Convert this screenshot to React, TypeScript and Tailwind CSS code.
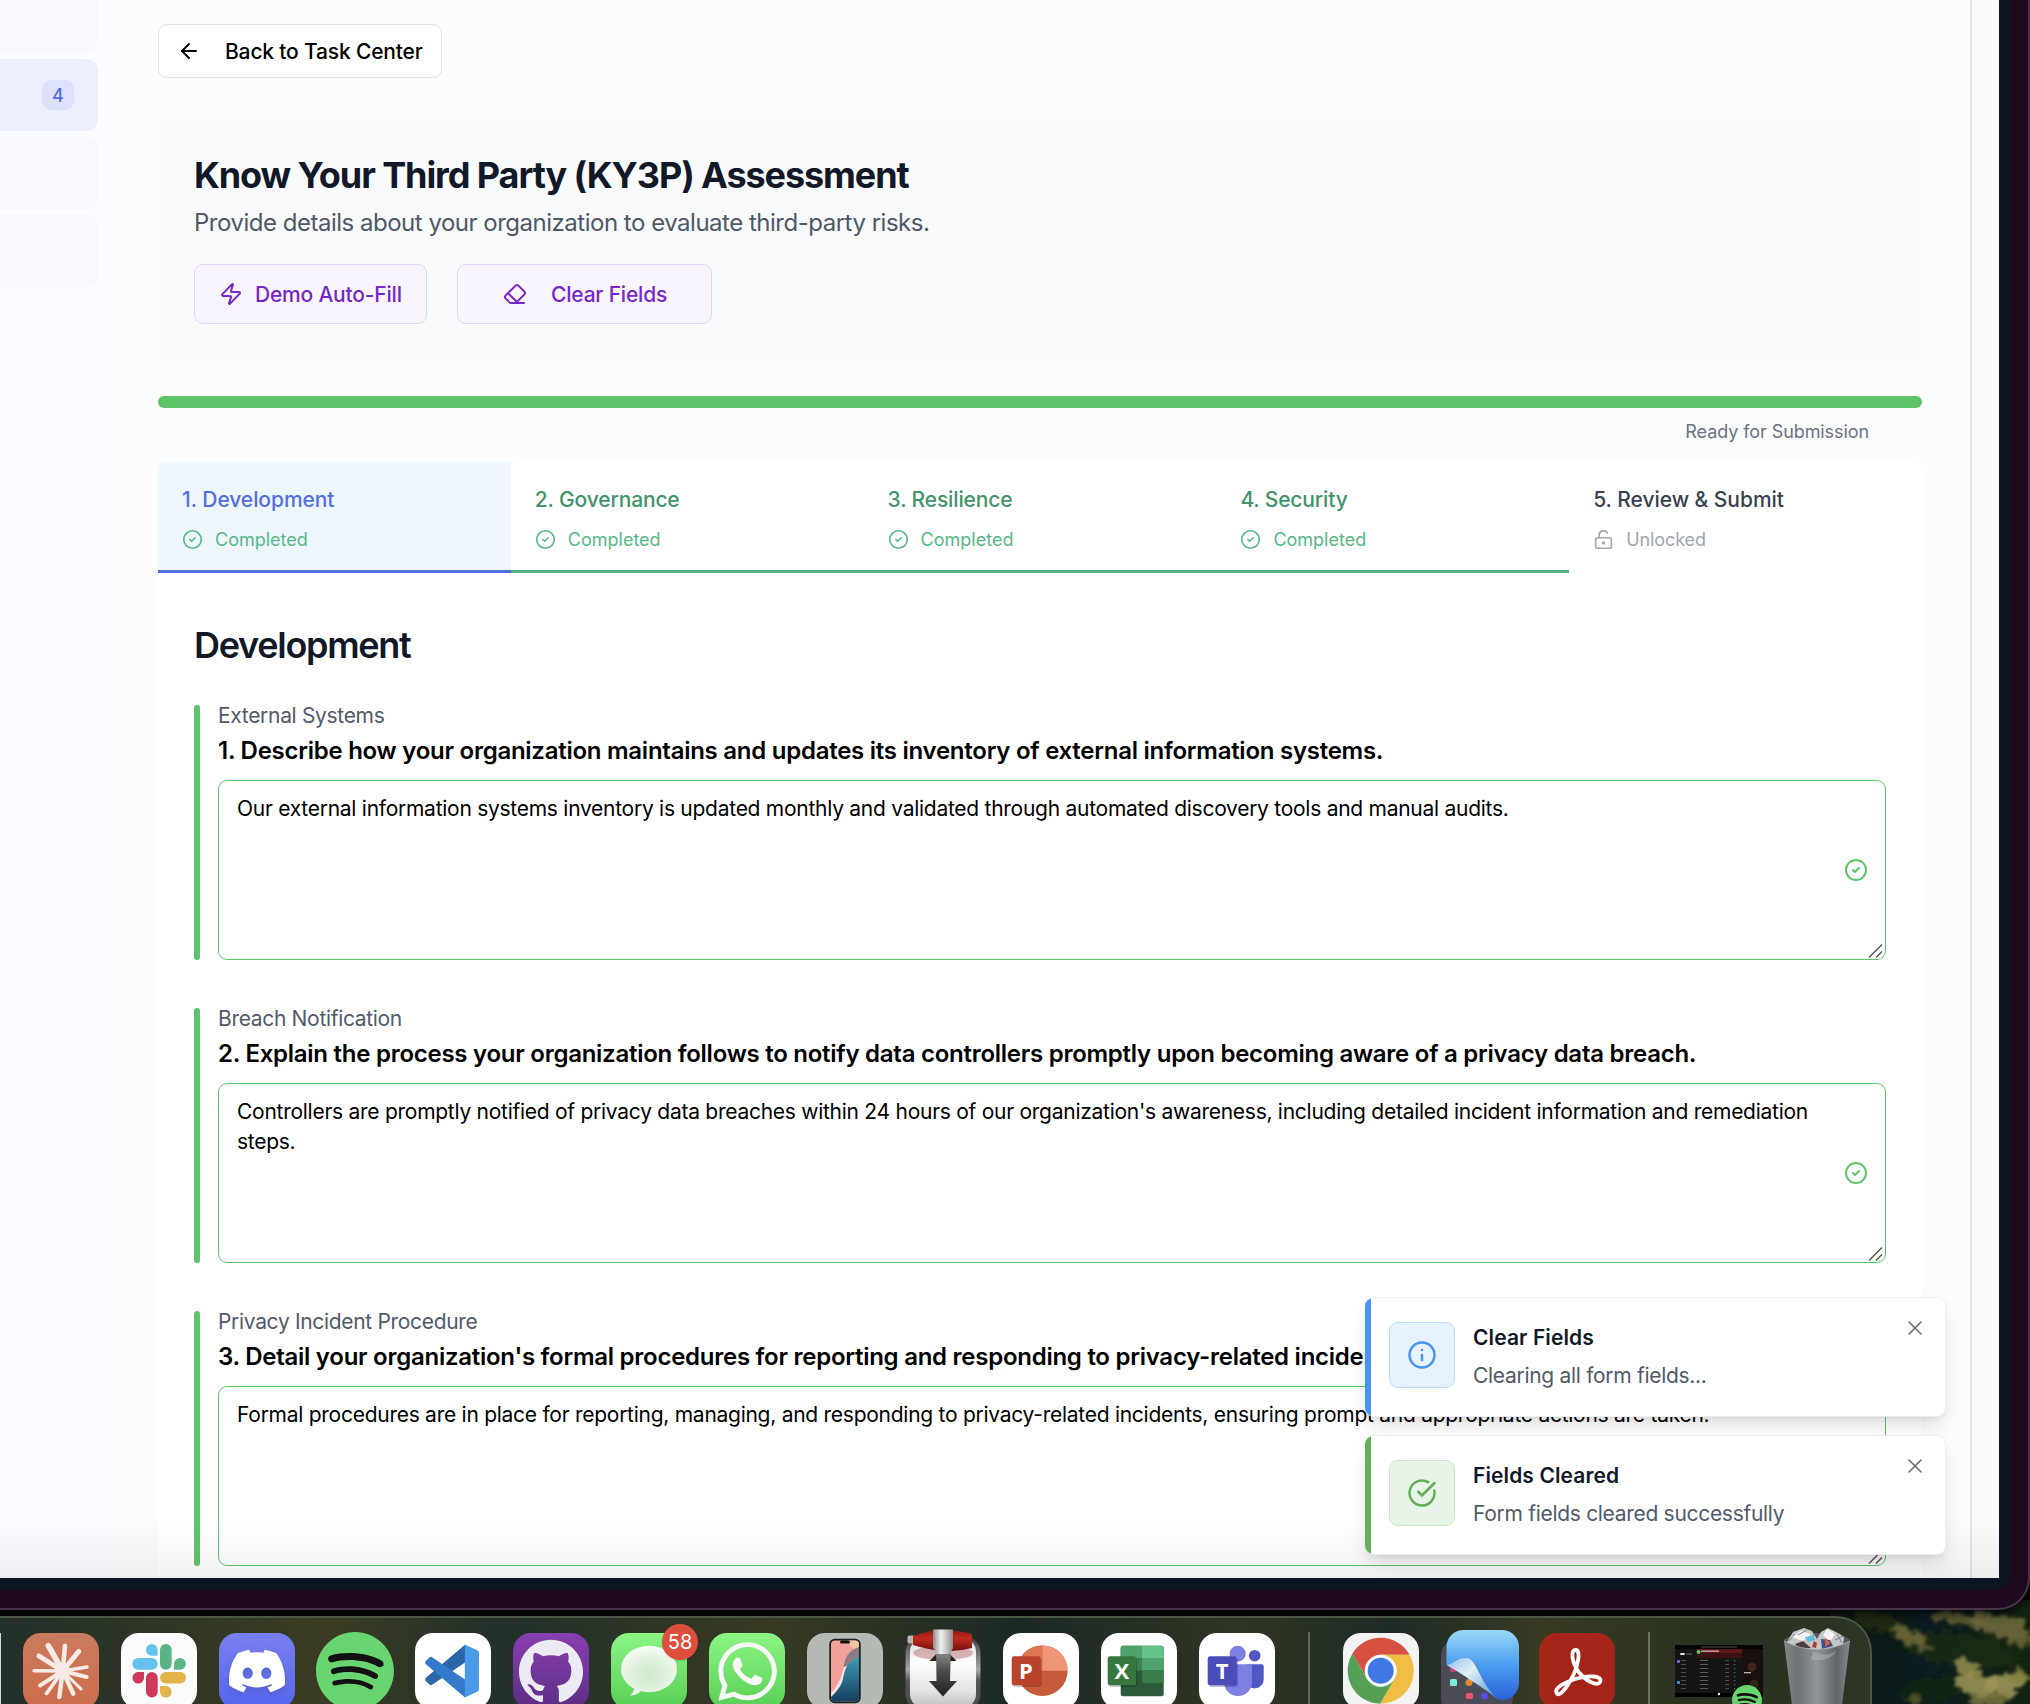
import type { ReactNode } from "react";
import {
  ArrowLeft,
  CircleCheck,
  CircleCheckBig,
  Eraser,
  Info,
  LockKeyholeOpen,
  X,
  Zap,
} from "lucide-react";
import { SiDiscord, SiGithub, SiSpotify } from "react-icons/si";
import { FaWhatsapp } from "react-icons/fa";

const fields = [
  {
    label: "External Systems",
    question:
      "1. Describe how your organization maintains and updates its inventory of external information systems.",
    answer:
      "Our external information systems inventory is updated monthly and validated through automated discovery tools and manual audits.",
  },
  {
    label: "Breach Notification",
    question:
      "2. Explain the process your organization follows to notify data controllers promptly upon becoming aware of a privacy data breach.",
    answer:
      "Controllers are promptly notified of privacy data breaches within 24 hours of our organization's awareness, including detailed incident information and remediation steps.",
  },
  {
    label: "Privacy Incident Procedure",
    question:
      "3. Detail your organization's formal procedures for reporting and responding to privacy-related incidents.",
    answer:
      "Formal procedures are in place for reporting, managing, and responding to privacy-related incidents, ensuring prompt and appropriate actions are taken.",
  },
];

function Sidebar() {
  return (
    <aside className="flex w-[110px] shrink-0 flex-col gap-1.5 bg-[#fbfcff]">
      <div className="h-[53px] w-[98px] rounded-br-xl bg-[#f8f9fd]" />
      <div className="flex h-[72px] w-[98px] items-center justify-end rounded-r-xl bg-[#ebeffe] pr-6">
        <span className="flex h-[30px] w-8 items-center justify-center rounded-[9px] bg-[#dde2fa] text-[18px] font-medium text-[#536ce3]">
          4
        </span>
      </div>
      <div className="h-[72px] w-[98px] rounded-r-xl bg-[#f8f9fd]" />
      <div className="h-[72px] w-[98px] rounded-r-xl bg-[#f8f9fd]" />
    </aside>
  );
}

function HeaderCard() {
  return (
    <section className="mt-9 h-[246px] rounded-t-lg bg-[#f9fafc] p-9">
      <h1 className="text-[36px] font-bold leading-[50px] tracking-[-1.09px] text-[#111827]">
        Know Your Third Party (KY3P) Assessment
      </h1>
      <p className="mt-[5px] text-[24px] leading-9 tracking-[-0.49px] text-[#4f5866]">
        Provide details about your organization to evaluate third-party risks.
      </p>
      <div className="mt-[23px] flex gap-[30px] text-[21px] font-medium tracking-[-0.2px] text-[#7627c8]">
        <button className="flex h-[60px] w-[233px] items-center rounded-[9px] border border-[#e6d3fb] bg-[#f9f5ff] pl-6">
          <Zap size={24} strokeWidth={2} />
          <span className="ml-3 pt-0.5">Demo Auto-Fill</span>
        </button>
        <button className="flex h-[60px] w-[255px] items-center rounded-[9px] border border-[#e6d3fb] bg-[#f9f5ff] pl-[45px]">
          <Eraser size={24} strokeWidth={2} />
          <span className="ml-6 pt-0.5">Clear Fields</span>
        </button>
      </div>
    </section>
  );
}

function CompletedTab({ title, active }: { title: string; active?: boolean }) {
  return (
    <div
      className={
        active
          ? "flex-1 rounded-tl-lg border-b-[3px] border-[#526fe2] bg-[#eef6fe] pl-6 pt-[23px]"
          : "flex-1 border-b-[3px] border-[#52b284] pl-6 pt-[23px]"
      }
    >
      <div
        className={
          active
            ? "text-[21px] font-medium leading-[30px] tracking-[-0.06px] text-[#536fe4]"
            : "text-[21px] font-medium leading-[30px] tracking-[-0.15px] text-[#42946b]"
        }
      >
        {title}
      </div>
      <div className="mt-3 flex h-6 items-center gap-3 text-[18px] text-[#58b888]">
        <CircleCheck size={21} strokeWidth={1.9} />
        Completed
      </div>
    </div>
  );
}

function Tabs() {
  return (
    <div className="flex h-[111px]">
      <CompletedTab title="1. Development" active />
      <CompletedTab title="2. Governance" />
      <CompletedTab title="3. Resilience" />
      <CompletedTab title="4. Security" />
      <div className="flex-1 pl-6 pt-[23px]">
        <div className="text-[21px] font-medium leading-[30px] tracking-[-0.04px] text-[#384151]">
          5. Review &amp; Submit
        </div>
        <div className="mt-3 flex h-6 items-center gap-3 text-[18px] tracking-[-0.1px] text-[#a1a7b2]">
          <LockKeyholeOpen size={21} strokeWidth={1.9} />
          Unlocked
        </div>
      </div>
    </div>
  );
}

function Field({ label, question, answer }: (typeof fields)[number]) {
  return (
    <div className="flex h-[255px] shrink-0 gap-[18px]">
      <div className="w-1.5 rounded-full bg-[#5fc469]" />
      <div className="flex-1">
        <div className="text-[21px] leading-[21px] tracking-[-0.32px] text-[#525a68]">{label}</div>
        <div className="mt-[7px] whitespace-nowrap text-[24px] font-semibold leading-9 tracking-[-0.26px] text-black">
          {question}
        </div>
        <div className="relative mt-[11px] h-[180px] w-[1668px] rounded-[9px] border border-[#5fc469] bg-white pl-[18px] pr-[69px] pt-[13px]">
          <p className="text-[21px] leading-[30px] tracking-[-0.265px] text-black">{answer}</p>
          <CircleCheck
            size={24}
            strokeWidth={1.9}
            className="absolute right-[17px] top-[77px] text-[#5fc469]"
          />
          <svg
            viewBox="0 0 16 16"
            className="absolute bottom-0 right-px h-4 w-4"
            fill="none"
            stroke="#555"
            strokeWidth="1.5"
          >
            <path d="M1 14.500 14 1.500M8 14.500l6-6" />
          </svg>
        </div>
      </div>
    </div>
  );
}

function Toast({
  kind,
  title,
  text,
}: {
  kind: "info" | "success";
  title: string;
  text: string;
}) {
  const info = kind === "info";
  return (
    <div className="flex h-[120px] w-[581px] overflow-hidden rounded-[9px] border border-l-0 border-[#eeeff1] bg-white shadow-[0_12px_22px_-4px_rgba(0,0,0,0.12),0_4px_8px_-4px_rgba(0,0,0,0.1)]">
      <div className={info ? "w-1.5 bg-[#4795f0]" : "w-1.5 bg-[#66b05c]"} />
      <div
        className={
          info
            ? "ml-[18px] mt-6 flex size-[66px] items-center justify-center rounded-[9px] border border-[#c0dbf8] bg-[#e6f2fd] text-[#4795f0]"
            : "ml-[18px] mt-6 flex size-[66px] items-center justify-center rounded-[9px] border border-[#cbe6cb] bg-[#e9f4e8] text-[#62ae58]"
        }
      >
        {info ? <Info size={30} strokeWidth={2} /> : <CircleCheckBig size={30} strokeWidth={2} />}
      </div>
      <div className="ml-[18px] mt-[25px] flex-1">
        <div className="text-[21px] font-semibold leading-[30px] tracking-[0.1px] text-[#111827]">
          {title}
        </div>
        <div className="mt-2 text-[21px] leading-[30px] tracking-[-0.3px] text-[#525a68]">
          {text}
        </div>
      </div>
      <X size={24} strokeWidth={1.6} className="mr-[18px] mt-[18px] text-[#666e7c]" />
    </div>
  );
}

function DockIcon({ children, className = "" }: { children?: ReactNode; className?: string }) {
  return (
    <div
      className={`relative flex size-[76px] shrink-0 items-center justify-center rounded-[18px] ${className}`}
    >
      {children}
    </div>
  );
}

function Art({ children }: { children: ReactNode }) {
  return (
    <svg viewBox="0 0 76 76" className="size-[76px] overflow-visible">
      {children}
    </svg>
  );
}

const rays = [
  [25.3, 12.7, 5.6],
  [42, 12.7, 4.6],
  [55.7, 18.5, 5],
  [64, 34, 3.6],
  [63.6, 44, 4],
  [58, 56, 3],
  [50.3, 60.7, 4.4],
  [36.3, 64, 4.4],
  [23.5, 60.5, 3.8],
  [17, 52.5, 4],
  [11, 37.7, 3.4],
  [16, 23, 5],
];

function Claude() {
  return (
    <Art>
      <g stroke="#f8ebe5" strokeLinecap="round">
        {rays.map(([x, y, w]) => (
          <line key={x} x1="39.7" y1="38" x2={x} y2={y} strokeWidth={w} />
        ))}
      </g>
      <circle cx="39.7" cy="38" r="7" fill="#f8ebe5" />
    </Art>
  );
}

function Slack() {
  return (
    <Art>
      <path d="M30.8 11a5.8 5.8 0 0 1 5.8 5.8v6h-5.8a5.9 5.9 0 0 1 0-11.8Z" fill="#63c3ec" />
      <rect x="11.3" y="25" width="25.4" height="11.7" rx="5.8" fill="#63c3ec" />
      <rect x="39" y="11" width="11.7" height="25.7" rx="5.8" fill="#5ab483" />
      <path d="M59 25a5.8 5.8 0 0 1 0 11.7h-5.9V31A5.9 5.9 0 0 1 59 25Z" fill="#5ab483" />
      <path d="M17.1 39H23v5.8A5.8 5.8 0 1 1 17.1 39Z" fill="#cf375c" />
      <rect x="25" y="39" width="11.7" height="25.4" rx="5.8" fill="#cf375c" />
      <rect x="39" y="39" width="26" height="11.4" rx="5.7" fill="#e3b34c" />
      <path d="M39 53h5.8a5.8 5.8 0 1 1-5.8 5.8Z" fill="#e3b34c" />
    </Art>
  );
}

function VsCode() {
  return (
    <Art>
      <path d="M50 11.8V29.5L17.5 51.6a2.5 2.5 0 0 1-3 0l-3.3-3a2.5 2.5 0 0 1 0-4Z" fill="#2a66a9" />
      <path d="M50 64.6V46.5L17.5 24.4a2.5 2.5 0 0 0-3 0l-3.3 3a2.5 2.5 0 0 0 0 4Z" fill="#3579ca" />
      <path d="M49.8 11.6 62.6 17.6A2.6 2.6 0 0 1 64 20V56a2.6 2.6 0 0 1-1.4 2.4L49.8 64.6Z" fill="#4b9bea" />
    </Art>
  );
}

function Messages() {
  return (
    <>
      <Art>
        <defs>
          <radialGradient id="bubble" cx="0.5" cy="0.62" r="0.6">
            <stop offset="0" stopColor="#cfe8cb" />
            <stop offset="0.6" stopColor="#e3f3e0" />
            <stop offset="1" stopColor="#f8fcf7" />
          </radialGradient>
        </defs>
        <path d="M23 52c1 4-1 8-4 10.600 5 0 9-2 12-6Z" fill="#e6f6e3" />
        <ellipse cx="38" cy="36" rx="28" ry="23.200" fill="url(#bubble)" />
      </Art>
      <span className="absolute -right-[11px] -top-[9px] flex size-9 items-center justify-center rounded-full bg-[#de4e3c] text-[20px] font-normal text-white shadow">
        58
      </span>
    </>
  );
}

function Phone() {
  return (
    <Art>
      <defs>
        <linearGradient id="wave" x1="0" y1="0" x2="0" y2="1">
          <stop offset="0" stopColor="#3f9cb4" />
          <stop offset="1" stopColor="#153a5e" />
        </linearGradient>
        <clipPath id="screen">
          <rect x="24" y="7.500" width="28" height="61" rx="4" />
        </clipPath>
      </defs>
      <rect x="22.300" y="5.700" width="31.400" height="64.500" rx="5.500" fill="#1b1c20" />
      <g clipPath="url(#screen)">
        <rect x="24" y="7" width="28" height="62" fill="#f2a29b" />
        <path d="M40 7h12v12c-5-2-9-7-12-12Z" fill="#f6c59f" />
        <path d="M52 14c-10 3-16 12-15 22l15-10Z" fill="#8a7d86" />
        <path d="M24 60c6-6 10-14 13-26l6-2-12 28-7 8Z" fill="#efe4df" />
        <path d="M52 24C38 30 38 38 36 46c-2 8-8 14-12 18v6h28Z" fill="url(#wave)" />
      </g>
      <rect x="33" y="7.500" width="10" height="3" rx="1.500" fill="#111" />
    </Art>
  );
}

function Transmission() {
  return (
    <Art>
      <defs>
        <linearGradient id="steel" x1="0" y1="0" x2="0" y2="1">
          <stop offset="0" stopColor="#d9d9d9" />
          <stop offset="0.35" stopColor="#ffffff" />
          <stop offset="0.75" stopColor="#e4e4e4" />
          <stop offset="1" stopColor="#bdbdbd" />
        </linearGradient>
        <linearGradient id="frame" x1="0" y1="0" x2="0" y2="1">
          <stop offset="0" stopColor="#3c3c3c" />
          <stop offset="0.45" stopColor="#a8a8a8" />
          <stop offset="0.6" stopColor="#555" />
          <stop offset="1" stopColor="#4a4a4a" />
        </linearGradient>
        <linearGradient id="lever" x1="0" y1="0" x2="0" y2="1">
          <stop offset="0" stopColor="#9b9b9b" />
          <stop offset="0.5" stopColor="#4a4a4a" />
          <stop offset="1" stopColor="#202020" />
        </linearGradient>
        <linearGradient id="band" x1="0" y1="0" x2="1" y2="0">
          <stop offset="0" stopColor="#8c8c8c" />
          <stop offset="0.4" stopColor="#f2f2f2" />
          <stop offset="1" stopColor="#8c8c8c" />
        </linearGradient>
        <linearGradient id="grip" x1="0" y1="0" x2="0" y2="1">
          <stop offset="0" stopColor="#8f1a14" />
          <stop offset="0.4" stopColor="#c22a1c" />
          <stop offset="1" stopColor="#6e0f0c" />
        </linearGradient>
      </defs>
      <rect x="0.500" y="3" width="75" height="75" rx="17" fill="url(#frame)" />
      <rect x="5" y="5" width="66" height="70" rx="14" fill="url(#steel)" />
      <ellipse cx="38" cy="20" rx="30" ry="7" fill="#a53a34" opacity="0.350" />
      <path d="M24.500 28 38 14l13.500 14Z" fill="#222" />
      <path d="M31 14h15l-1 34h7L38 63.500 24 48h7.500Z" fill="url(#lever)" />
      <rect x="2.500" y="2.500" width="8" height="8" rx="2" fill="#b8b8b8" />
      <path d="M8 3Q24-3 38-3t29 4v14q-15 4-29 3T8 12Z" fill="url(#grip)" />
      <path d="M28-3.500h20V15q-2 3-2 6H31q0-4-3-6Z" fill="url(#band)" />
    </Art>
  );
}

function Letter({ children, x, y = 45.5 }: { children: string; x: number; y?: number }) {
  return (
    <text
      x={x}
      y={y}
      textAnchor="middle"
      fontFamily="Open Sans, sans-serif"
      fontWeight="700"
      fontSize="22"
      fill="#fff"
    >
      {children}
    </text>
  );
}

function PowerPoint() {
  return (
    <Art>
      <circle cx="39.300" cy="37.700" r="25.300" fill="#c65b3c" />
      <path d="M39.300 12.400v25.300H14a25.300 25.300 0 0 1 25.300-25.300Z" fill="#de7551" />
      <path d="M39.300 12.400a25.300 25.300 0 0 1 25.300 25.300H39.300Z" fill="#f09575" />
      <rect x="9.700" y="25" width="29" height="29" rx="2.500" fill="#000" opacity="0.200" />
      <rect x="8.700" y="23.300" width="29" height="29" rx="2.500" fill="#b8432a" />
      <Letter x={23}>P</Letter>
    </Art>
  );
}

function Excel() {
  return (
    <Art>
      <rect x="19.700" y="12.700" width="43" height="50.500" rx="2.500" fill="#2b5b38" />
      <path d="M22.200 12.700H41V25H19.700v-9.800a2.500 2.500 0 0 1 2.500-2.500Z" fill="#4fa26c" />
      <path d="M41 12.700h19.200a2.500 2.500 0 0 1 2.500 2.500V25H41Z" fill="#63c388" />
      <path d="M19.700 25H41v12.500H19.700Z" fill="#3c8152" />
      <path d="M41 25h21.700v12.500H41Z" fill="#4fa26c" />
      <path d="M41 37.500h21.700V50H41Z" fill="#3a7b4a" />
      <rect x="7.700" y="25" width="28.500" height="29" rx="2.500" fill="#000" opacity="0.200" />
      <rect x="6.700" y="23.300" width="28.500" height="29" rx="2.500" fill="#36763f" />
      <Letter x={20.8}>X</Letter>
    </Art>
  );
}

function Teams() {
  return (
    <Art>
      <circle cx="55.700" cy="22.700" r="5.800" fill="#5158c4" />
      <path d="M48 31.300h14.700a2 2 0 0 1 2 2V46a9 9 0 0 1-16.700 5Z" fill="#5158c4" />
      <circle cx="38.700" cy="20.700" r="8" fill="#7c80e2" />
      <path d="M25 31.300h26a2 2 0 0 1 2 2V49a14 14 0 0 1-28 0Z" fill="#7c80e2" />
      <rect x="10" y="25" width="29" height="29" rx="2.500" fill="#23267a" opacity="0.300" />
      <rect x="8.700" y="23.300" width="29" height="29" rx="2.500" fill="#4a4db8" />
      <Letter x={23.2}>T</Letter>
    </Art>
  );
}

function Chrome() {
  return (
    <Art>
      <path d="M23.800 45.700 9.400 20.700A33 33 0 0 1 66.600 21.700H37.700Z" fill="#d75141" />
      <path d="M37.700 21.700H66.600A33 33 0 0 1 37.100 70.700L51.600 45.700Z" fill="#f2bd45" />
      <path d="M51.600 45.700 37.100 70.700A33 33 0 0 1 9.400 20.700L23.800 45.700Z" fill="#54a056" />
      <circle cx="37.700" cy="37.700" r="16" fill="#fff" />
      <circle cx="37.700" cy="37.700" r="13" fill="#4079e6" />
    </Art>
  );
}

function Peel() {
  return (
    <Art>
      <defs>
        <linearGradient id="sheet" x1="0" y1="0" x2="0" y2="1">
          <stop offset="0" stopColor="#9ad8fa" />
          <stop offset="0.5" stopColor="#4a9eee" />
          <stop offset="1" stopColor="#2b62d6" />
        </linearGradient>
        <linearGradient id="curl" x1="0" y1="0" x2="1" y2="1">
          <stop offset="0" stopColor="#8fbfe8" />
          <stop offset="0.4" stopColor="#e3f1f8" />
          <stop offset="1" stopColor="#4f93da" />
        </linearGradient>
      </defs>
      <rect x="0" y="6" width="72" height="76" rx="17" fill="#4b4c56" />
      <rect x="9" y="33" width="6" height="6" rx="2" fill="#cf3f78" />
      <rect x="9" y="46" width="7" height="7" rx="1.500" fill="#79ecd9" />
      <circle cx="28" cy="49.500" r="3.500" fill="#e08a2c" />
      <rect x="25" y="60" width="7" height="6" rx="1.500" fill="#ee5365" />
      <circle cx="43.500" cy="63" r="3.500" fill="#5b4ce8" />
      <path d="M5.500 32V14A17 17 0 0 1 22.500-3H61A17 17 0 0 1 78 14V50A17 17 0 0 1 62 67C48 67 44 48 33 30Z" fill="url(#sheet)" />
      <path d="M5.500 32C14 30 18 24 26 25 36 26 40 52 56 65 40 54 20 40 5.500 32Z" fill="url(#curl)" />
    </Art>
  );
}

function Acrobat() {
  return (
    <Art>
      <path
        d="M36.600 17C31 17 33 30 40 39.500 46 47 58 54 61 49 64 42.500 50 42 38 45.500 26 49 15 55 17.500 60 20.500 65 28 54 34 43 38.500 34 42.500 17 36.600 17Z"
        fill="none"
        stroke="#fff"
        strokeWidth="3.800"
        strokeLinejoin="round"
      />
    </Art>
  );
}

function SpotifyWindow() {
  return (
    <div className="relative mt-3 h-[52px] w-[88px] shrink-0 bg-[#141414]">
      <svg viewBox="0 0 88 52" className="h-[52px] w-[88px]">
        <rect width="88" height="4" fill="#050505" />
        <rect x="26" y="1" width="36" height="2" rx="1" fill="#2a2a2a" />
        <rect x="22" y="4" width="45" height="4" fill="#5e1618" />
        <rect x="22" y="8" width="45" height="5" fill="#3a1214" />
        <circle cx="23.500" cy="7" r="2" fill="#5fc469" />
        <rect x="26" y="5.500" width="18" height="1.300" fill="#c9b6b6" />
        <rect x="67" y="4" width="21" height="44" fill="#17100e" />
        <circle cx="77" cy="22" r="4.500" fill="#42241c" />
        <rect x="69" y="27" width="7" height="1.300" fill="#bbb" />
        <circle cx="79" cy="39" r="4.500" fill="#332419" />
        <rect x="5" y="8" width="5" height="2" rx="1" fill="#ddd" />
        <rect x="11" y="8" width="6" height="2" rx="1" fill="#444" />
        <rect x="2" y="15" width="3" height="3" fill="#7257e8" />
        <rect x="2" y="36" width="3" height="3" fill="#3a86d8" />
        {[15, 19, 23, 27, 31, 35, 39, 43].map((y) => (
          <g key={y} fill="#5a5a5a">
            <rect x="25" y={y} width="8" height="1" />
            <rect x="50" y={y} width="4" height="0.8" />
            <rect x="6" y={y} width="5" height="0.8" />
            <rect x="59" y={y} width="1.2" height="1.2" fill="#2f8a48" />
          </g>
        ))}
        <rect y="48" width="88" height="4" fill="#000" />
        <circle cx="44" cy="49" r="1.200" fill="#eee" />
      </svg>
      <div className="absolute left-[57px] top-10 size-[30px] rounded-full bg-[#111] bg-clip-content p-px">
        <SiSpotify size={30} color="#69d571" className="-m-px" />
      </div>
    </div>
  );
}

function Trash() {
  return (
    <svg viewBox="0 0 68 80" className="mb-auto h-20 w-[68px] shrink-0 overflow-visible">
      <defs>
        <linearGradient id="bin" x1="0" y1="0" x2="1" y2="0">
          <stop offset="0" stopColor="#85888a" />
          <stop offset="0.2" stopColor="#6f7274" />
          <stop offset="0.5" stopColor="#919597" />
          <stop offset="0.8" stopColor="#626567" />
          <stop offset="1" stopColor="#888b8d" />
        </linearGradient>
      </defs>
      <ellipse cx="34" cy="8" rx="33" ry="8" fill="#55585a" />
      <path d="M4 9 10-1l11-4 8 3 5 8 4-7 7-4 10 5 6 4-1 8-20 5H15Z" fill="#c4c6c7" />
      <path d="m8 4 10-6 10 3-8 7ZM40 2l4-6 8 5-5 8Z" fill="#f5f5f5" />
      <path d="m6 8 6-7M24-3l-9 5M54 1l5 9M60 3l-8 4M31 0l-3 8" stroke="#7d8082" strokeWidth="1" />
      <path d="m12 11 8-3 8 7-12 1Z" fill="#4b4240" />
      <path d="m22 4 9-1 1 4-7 2Z" fill="#54bfd6" />
      <path d="m38 6 9 1 3 6-11 3Z" fill="#3a4f94" />
      <path d="m42 5 6 5-6 4Z" fill="#d5662f" />
      <path d="m31 8 3 2-1 5-4-1Z" fill="#b3382f" />
      <path d="M1 8q33 17 66 0L58 80H10Z" fill="url(#bin)" />
      <path d="M30 18q14 8 24-1-6 12-26 10Z" fill="#b5b8ba" opacity="0.500" />
      <path d="M1 8q33 17 66 0" fill="none" stroke="#a9acae" strokeWidth="0.800" />
    </svg>
  );
}

const leaves: [number, number, number, number, number, string, number][] = [
  [1880, 1622, 26, 10, 20, "#26300f", 0.7],
  [1960, 1650, 60, 16, 8, "#1e3015", 0.7],
  [1930, 1690, 30, 14, -10, "#11240f", 0.8],
  [1908, 1636, 16, 7, 30, "#6b6836", 0.9],
  [1925, 1645, 9, 5, 20, "#6b6836", 0.7],
  [1958, 1618, 28, 6, 6, "#656131", 0.85],
  [2000, 1626, 30, 11, 12, "#726c3c", 0.85],
  [2018, 1640, 16, 6, 10, "#6b6836", 0.8],
  [1968, 1669, 15, 9, 20, "#8d8a4b", 0.9],
  [1978, 1686, 24, 11, 12, "#969153", 0.9],
  [2006, 1684, 20, 10, -14, "#9a9555", 0.9],
  [2018, 1676, 12, 7, 20, "#86823f", 0.8],
  [1990, 1699, 22, 7, 0, "#77743c", 0.85],
  [1914, 1699, 8, 4, -30, "#5b5a2c", 0.8],
];

function Wallpaper() {
  return (
    <svg viewBox="0 1600 2030 104" className="absolute bottom-0 left-0 h-[104px] w-[2030px]">
      <defs>
        <filter id="soft" x="-20%" y="-40%" width="140%" height="180%">
          <feTurbulence type="fractalNoise" baseFrequency="0.120" numOctaves="3" seed="7" />
          <feDisplacementMap
            in="SourceGraphic"
            scale="20"
            xChannelSelector="R"
            yChannelSelector="G"
          />
          <feGaussianBlur stdDeviation="1.600" />
        </filter>
        <linearGradient id="ground" x1="0" x2="1">
          <stop offset="0" stopColor="#0b1710" />
          <stop offset="0.5" stopColor="#0b1b20" />
          <stop offset="1" stopColor="#14230f" />
        </linearGradient>
      </defs>
      <rect y="1600" width="2030" height="104" fill="#050704" />
      <rect x="1830" y="1600" width="200" height="104" fill="url(#ground)" />
      <g filter="url(#soft)">
        {leaves.map(([x, y, rx, ry, a, color, opacity]) => (
          <ellipse
            key={`${x}-${y}`}
            cx={x}
            cy={y}
            rx={rx}
            ry={ry}
            fill={color}
            opacity={opacity}
            transform={`rotate(${a} ${x} ${y})`}
          />
        ))}
      </g>
    </svg>
  );
}

function Dock() {
  return (
    <div className="relative mt-1.5 flex h-[120px] w-[1872px] items-start rounded-tr-[36px] border-r-2 border-t-2 border-[#4c5645] bg-[linear-gradient(90deg,#22302a_0px,#343823_230px,#3a3b22_330px,#22302a_500px,#373922_770px,#1b2925_1020px,#2f3523_1240px,#1f2b26_1390px,#373922_1540px,#28321f_1720px,#2d3525_1872px)] pt-[15px]">
      <div className="h-[76px] w-px shrink-0 bg-[#d4d8d6]" />
      <div className="ml-[22px] flex gap-[22px]">
        <DockIcon className="bg-gradient-to-b from-[#cb7b5e] to-[#cc6c4b]">
          <Claude />
        </DockIcon>
        <DockIcon className="bg-[#fbfbfb]">
          <Slack />
        </DockIcon>
        <DockIcon className="bg-gradient-to-b from-[#7880ee] to-[#5865ee]">
          <SiDiscord size={56} color="#fff" className="drop-shadow-md" />
        </DockIcon>
        <DockIcon>
          <div className="-m-px size-[78px] shrink-0 rounded-full bg-[#111] bg-clip-content p-1">
            <SiSpotify size={78} color="#69d571" className="-m-1" />
          </div>
        </DockIcon>
        <DockIcon className="bg-white">
          <VsCode />
        </DockIcon>
        <DockIcon className="bg-gradient-to-b from-[#8a3fb0] to-[#5c2e85]">
          <SiGithub size={64} color="#eceaf2" />
        </DockIcon>
        <DockIcon className="bg-gradient-to-b from-[#8cf585] to-[#58cf54]">
          <Messages />
        </DockIcon>
        <DockIcon className="bg-gradient-to-b from-[#8cf585] to-[#58cf54]">
          <FaWhatsapp size={67} color="#f7f7f7" />
        </DockIcon>
        <DockIcon className="bg-[#b4bbb4]">
          <Phone />
        </DockIcon>
        <DockIcon>
          <Transmission />
        </DockIcon>
        <DockIcon className="bg-white">
          <PowerPoint />
        </DockIcon>
        <DockIcon className="bg-white">
          <Excel />
        </DockIcon>
        <DockIcon className="bg-white">
          <Teams />
        </DockIcon>
      </div>
      <div className="ml-[33px] mt-[-1px] h-20 w-0.5 shrink-0 bg-[#5f675b]" />
      <div className="ml-[33px] flex gap-[22px]">
        <DockIcon className="bg-[#f2f3f2]">
          <Chrome />
        </DockIcon>
        <DockIcon>
          <Peel />
        </DockIcon>
        <DockIcon className="bg-[#a42517]">
          <Acrobat />
        </DockIcon>
      </div>
      <div className="ml-[33px] mt-[-1px] h-20 w-0.5 shrink-0 bg-[#6b7259]" />
      <div className="ml-[25px] flex items-start gap-5">
        <SpotifyWindow />
        <Trash />
      </div>
    </div>
  );
}

export default function App() {
  return (
    <div className="relative h-[1704px] w-[2030px] overflow-hidden bg-black font-[Inter,sans-serif]">
      <Wallpaper />
      <div className="relative h-[1610px] w-[2030px] rounded-br-[32px] border-b-2 border-r-2 border-[#47334a] bg-[#1c0a1c] shadow-[0_2px_8px_2px_rgba(0,0,0,0.7)]">
        <div className="h-[1590px] w-[2010px] rounded-br-[18px] bg-[#0d1422]">
          <div className="relative flex h-[1578px] w-[1999px] overflow-hidden bg-[#fbfcfe]">
            <Sidebar />
            <main className="ml-12 flex w-[1764px] shrink-0 flex-col pt-6">
              <button className="flex h-[54px] w-[284px] shrink-0 items-center rounded-[9px] border border-[#dfe1e5] bg-white pl-[18px] text-[21px] font-medium tracking-[-0.17px] text-black">
                <ArrowLeft size={24} strokeWidth={2} />
                <span className="ml-6 pt-0.5">Back to Task Center</span>
              </button>
              <HeaderCard />
              <div className="mt-9 h-3 shrink-0 rounded-full bg-[#5fc469]" />
              <div className="mt-3 shrink-0 pr-[53px] text-right text-[18px] leading-6 tracking-[-0.08px] text-[#6b7280]">
                Ready for Submission
              </div>
              <div className="mt-[18px] h-[1200px] shrink-0 rounded-t-lg bg-white">
                <Tabs />
                <div className="flex flex-col px-9 pt-12">
                  <h2 className="text-[36px] font-semibold leading-[48px] tracking-[-1.28px] text-[#111827]">
                    Development
                  </h2>
                  <div className="mt-9 flex flex-col gap-12">
                    {fields.map((field) => (
                      <Field key={field.label} {...field} />
                    ))}
                  </div>
                </div>
              </div>
            </main>
            <div className="ml-auto w-[29px] shrink-0 border-l-2 border-[#e5e6e8] bg-[#fafafa]" />
            <div className="absolute inset-x-0 bottom-0 h-[60px] bg-gradient-to-b from-transparent to-black/5" />
            <div className="absolute left-[1365px] top-[1297px] flex flex-col gap-[18px]">
              <Toast kind="info" title="Clear Fields" text="Clearing all form fields..." />
              <Toast kind="success" title="Fields Cleared" text="Form fields cleared successfully" />
            </div>
          </div>
        </div>
      </div>
      <Dock />
    </div>
  );
}
